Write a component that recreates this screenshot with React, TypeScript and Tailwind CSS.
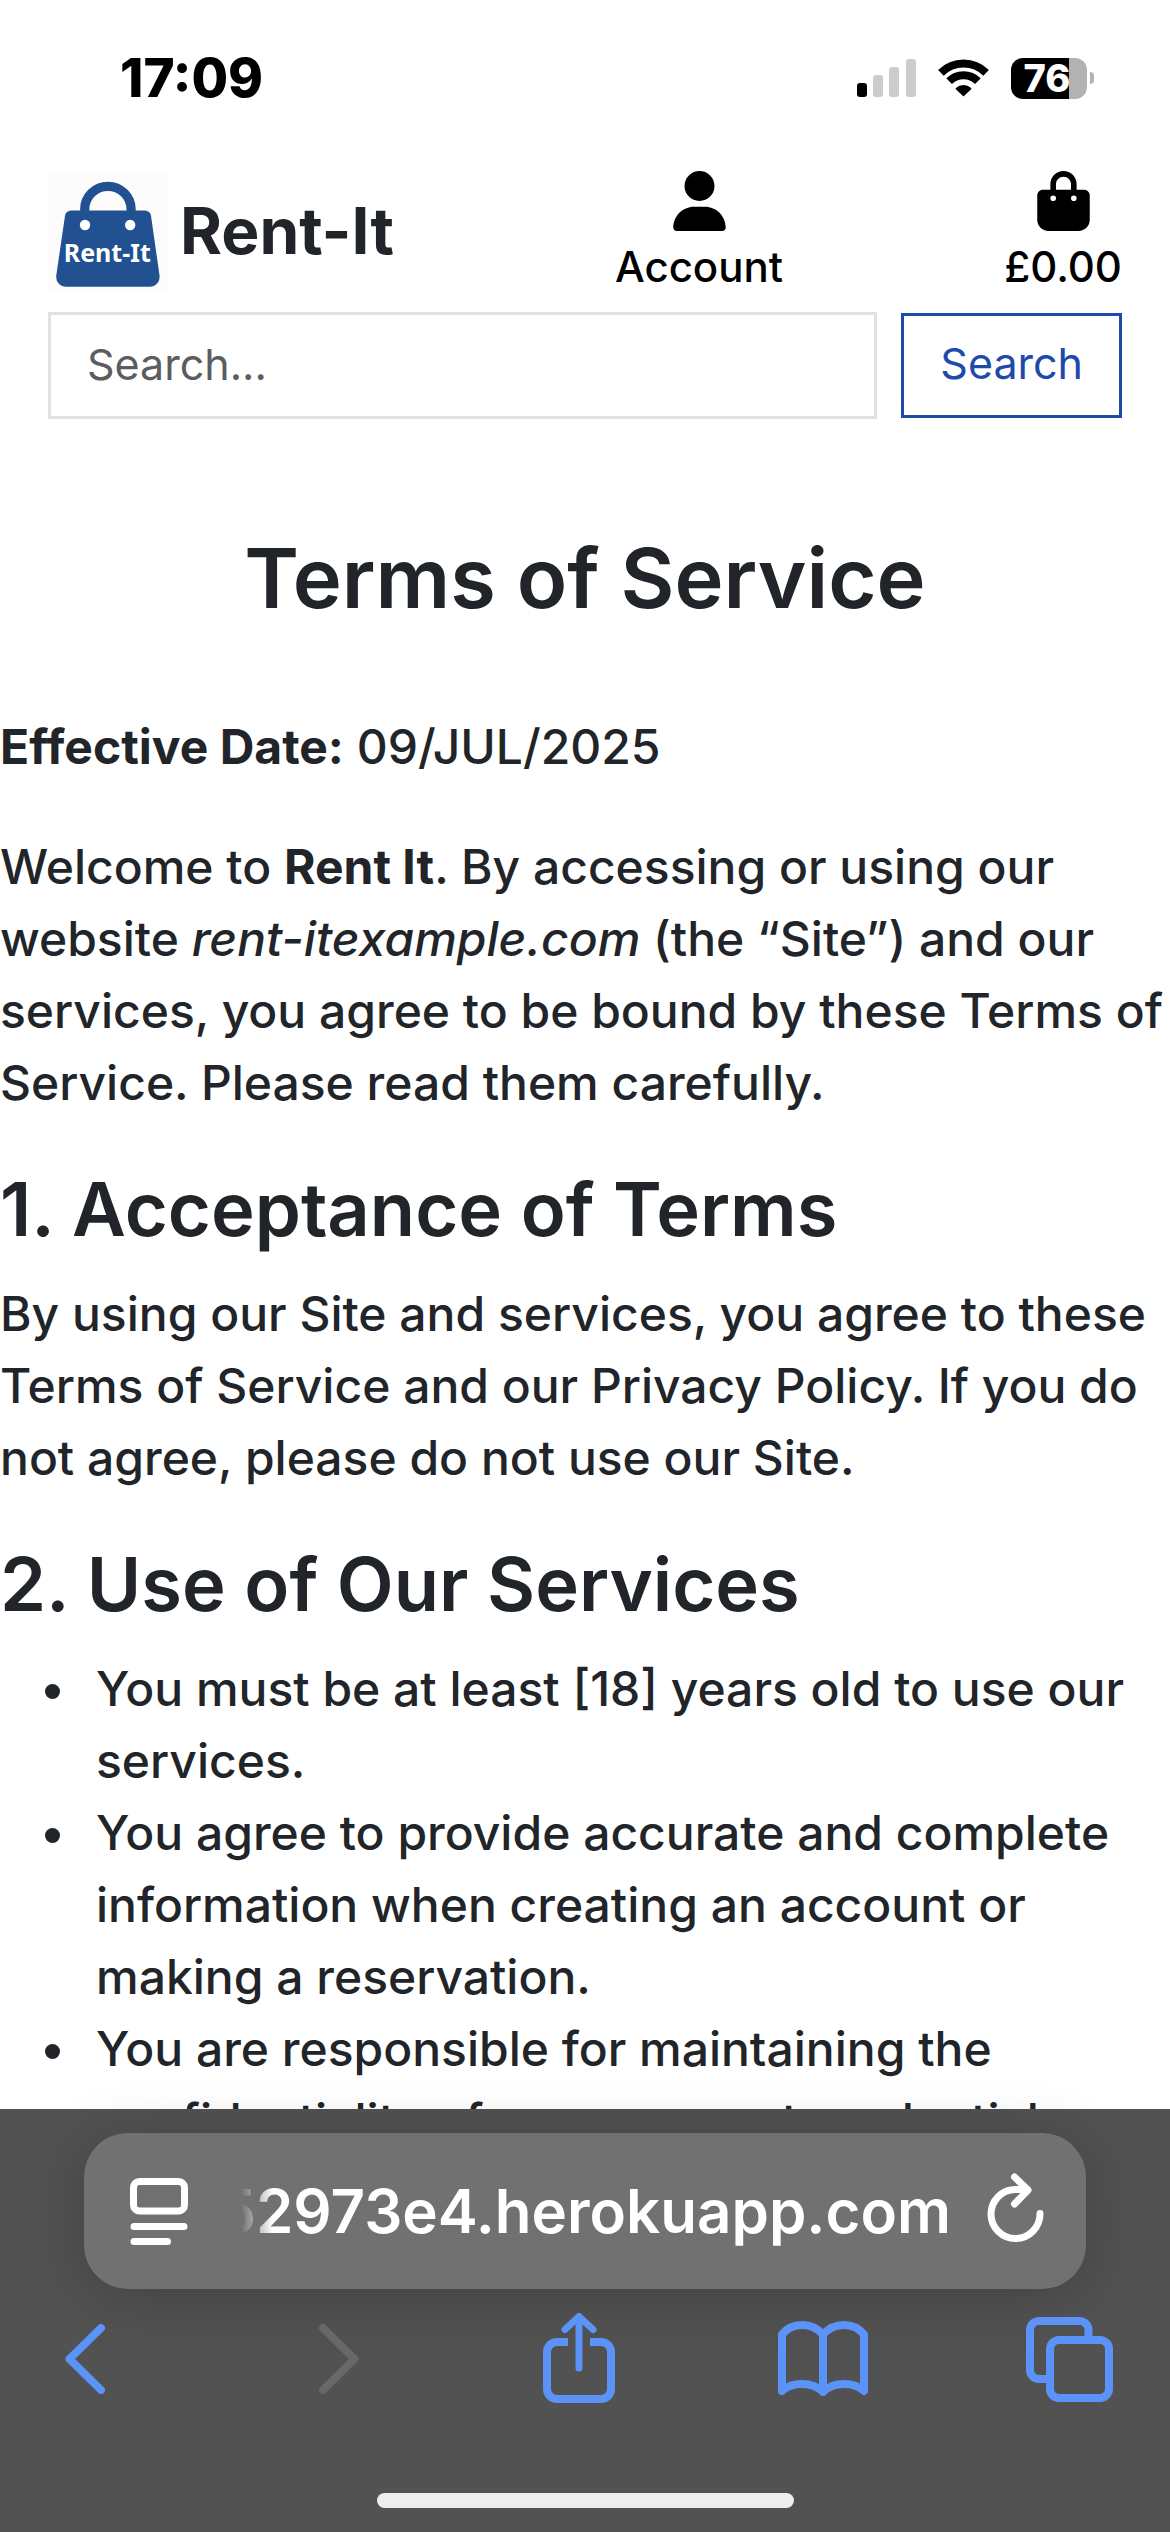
import type { ReactNode } from "react";
import { FaBagShopping, FaUser } from "react-icons/fa6";

function StatusBar() {
  return (
    <div className="flex h-[156px] shrink-0 items-center justify-between pr-[76px] pl-[120px] text-black">
      <time className="text-[53px] leading-none font-extrabold">17:09</time>
      <div className="flex items-center gap-[22px]">
        <svg className="h-[38px] w-[59px]" viewBox="0 0 59 38" aria-label="Signal strength" role="img">
          <rect x="0" y="24" width="10" height="14" rx="3" fill="#000" />
          <rect x="16" y="16" width="10" height="22" rx="3" fill="#ccc" />
          <rect x="32" y="8" width="10" height="30" rx="3" fill="#ccc" />
          <rect x="49" y="0" width="10" height="38" rx="3" fill="#ccc" />
        </svg>
        <svg className="h-[38px] w-[51px]" viewBox="0 0 51 38" aria-label="Wi-Fi" role="img">
          <g fill="none" stroke="#000" strokeWidth="8">
            <path d="M2.9 13.9A32 32 0 0 1 48.1 13.9" />
            <path d="M11.1 22.1A20.4 20.4 0 0 1 39.9 22.1" />
          </g>
          <path
            d="M25.5 36.5 18.4 29.6A10.5 10.5 0 0 1 32.6 29.6Z"
            fill="#000"
            stroke="#000"
            strokeWidth="1.5"
            strokeLinejoin="round"
          />
        </svg>
        <div className="flex items-center gap-[3px]">
          <div className="flex h-[41px] w-[76px] items-center justify-center rounded-[12px] bg-[linear-gradient(90deg,#000_76%,#b2b2b2_76%)] pr-[4px] text-[38px] leading-none font-extrabold text-white">
            76
          </div>
          <div className="h-[12px] w-[4px] rounded-r-full bg-[#b2b2b2]" />
        </div>
      </div>
    </div>
  );
}

function Logo() {
  return (
    <svg className="size-[120px] bg-[#fcfcfd]" viewBox="0 0 120 120" aria-hidden="true">
      <path d="M36.7 42V36.5a23.2 23.2 0 0 1 46.4 0V42" fill="none" stroke="#215190" strokeWidth="9.2" />
      <path
        d="M23 37.4H97a6 6 0 0 1 6 5.4L111.6 103a10 10 0 0 1-9.8 10.8H18A10 10 0 0 1 8.2 103L17 42.8a6 6 0 0 1 6-5.4Z"
        fill="#215190"
      />
      <circle cx="37" cy="52" r="5.2" fill="#fff" />
      <circle cx="82.2" cy="52" r="5.2" fill="#fff" />
      <text x="59.3" y="88.5" textAnchor="middle" fill="#fff" className="font-['Noto_Sans',sans-serif] text-[25px] font-bold">
        Rent-It
      </text>
    </svg>
  );
}

function Header() {
  return (
    <header className="px-12 pt-[15px]">
      <div className="flex items-start justify-between">
        <a href="#home" className="flex items-center gap-[12px] pt-0.5 text-[64px] leading-none font-bold">
          <Logo />
          <span className="pb-1">Rent-It</span>
        </a>
        <a href="#account" className="flex flex-col items-center gap-1 text-[42px] leading-[63px] font-medium text-black">
          <FaUser className="h-[60px] w-[53px]" />
          Account
        </a>
        <a href="#basket" className="flex flex-col items-center gap-1 text-[42px] leading-[63px] font-medium text-black">
          <FaBagShopping className="h-[60px] w-[53px]" />
          £0.00
        </a>
      </div>
      <form className="mt-[14px] flex items-center gap-6" onSubmit={(e) => e.preventDefault()}>
        <input
          type="search"
          aria-label="Search"
          placeholder="Search..."
          className="h-[107px] min-w-0 flex-1 border-3 border-[#dee2e6] bg-white px-9 pb-1 text-[43px] text-[#212529] outline-none placeholder:text-[#5c5d60]"
        />
        <button type="submit" className="h-[105px] border-3 border-[#1e4aaa] px-9 pb-1 text-[43px] text-[#1e4aaa]">
          Search
        </button>
      </form>
    </header>
  );
}

function Section({ title, children }: { title: string; children: ReactNode }) {
  return (
    <section className="mb-12">
      <h2 className="mb-[26px] text-[74px] leading-[85px] font-semibold">{title}</h2>
      {children}
    </section>
  );
}

function Item({ children }: { children: ReactNode }) {
  return (
    <li className="relative before:absolute before:top-[31px] before:-left-[51px] before:size-[15px] before:rounded-full before:bg-current">
      {children}
    </li>
  );
}

function Terms() {
  return (
    <main className="pt-[110px] text-[48px] leading-[72px] font-medium">
      <h1 className="mb-[84px] text-center text-[83px] leading-[98px] font-semibold">Terms of Service</h1>
      <p className="mb-12">
        <strong className="font-bold">Effective Date:</strong> 09/JUL/2025
      </p>
      <p className="mb-12">
        Welcome to <strong className="font-bold">Rent It</strong>. By accessing or using our website{" "}
        <em>rent-itexample.com</em> (the “Site”) and our services, you agree to be bound by these Terms of
        Service. Please read them carefully.
      </p>
      <Section title="1. Acceptance of Terms">
        <p>
          By using our Site and services, you agree to these Terms of Service and our Privacy Policy. If you do
          not agree, please do not use our Site.
        </p>
      </Section>
      <Section title="2. Use of Our Services">
        <ul className="pl-24">
          <Item>You must be at least [18] years old to use our services.</Item>
          <Item>You agree to provide accurate and complete information when creating an account or making a reservation.</Item>
          <Item>You are responsible for maintaining the confidentiality of your account credentials.</Item>
        </ul>
      </Section>
    </main>
  );
}

function BrowserBar() {
  return (
    <footer className="relative flex shrink-0 flex-col bg-[#525252] pt-6 pb-6">
      <div className="mx-[84px] flex h-[156px] items-center rounded-[44px] bg-[#717171] pr-[41px] pl-[46px] text-white shadow-[0_6px_60px_rgba(0,0,0,0.2)]">
        <button type="button" aria-label="Page settings">
          <svg className="h-[67px] w-[58px]" viewBox="0 0 58 67" fill="none" stroke="currentColor" strokeWidth="7" strokeLinecap="round">
            <rect x="3.5" y="3.5" width="51" height="29.5" rx="6" />
            <path d="M4 48.5H54M4 63.5H37.5" />
          </svg>
        </button>
        <button
          type="button"
          aria-label="Address"
          className="ml-[53px] flex min-w-0 flex-1 justify-end overflow-hidden text-[60px] leading-[76px] font-semibold whitespace-nowrap [mask-image:linear-gradient(90deg,transparent,#000_32px)]"
        >
          52973e4.herokuapp.com
        </button>
        <button type="button" aria-label="Reload" className="ml-[36px]">
          <svg className="h-[76px] w-[58px]" viewBox="0 0 58 76" fill="none" stroke="currentColor" strokeWidth="7" strokeLinecap="round" strokeLinejoin="round">
            <path d="M53 40.5A24.5 24.5 0 1 1 28.5 16.5H40" />
            <path d="M27.5 4 41 17 27.5 31" />
          </svg>
        </button>
      </div>
      <nav aria-label="Browser" className="mt-6 mr-[46px] ml-[30px] flex h-[92px] items-center justify-between text-[#5b93f8]">
        <button type="button" aria-label="Back" className="flex w-[110px] justify-center">
          <svg className="h-[70px] w-[40px]" viewBox="0 0 40 70" fill="none" stroke="currentColor" strokeWidth="8" strokeLinecap="round" strokeLinejoin="round">
            <path d="M36 4 4.5 35 36 66" />
          </svg>
        </button>
        <button type="button" aria-label="Forward" className="flex w-[110px] justify-center pl-4 text-[#686868]">
          <svg className="h-[70px] w-[40px]" viewBox="0 0 40 70" fill="none" stroke="currentColor" strokeWidth="8" strokeLinecap="round" strokeLinejoin="round">
            <path d="M4 4 35.5 35 4 66" />
          </svg>
        </button>
        <button type="button" aria-label="Share" className="flex w-[110px] justify-center pl-1">
          <svg className="h-[92px] w-[72px]" viewBox="0 0 72 92" fill="none" stroke="currentColor" strokeWidth="8">
            <path d="M25 29H14A10 10 0 0 0 4 39V76A10 10 0 0 0 14 86H58A10 10 0 0 0 68 76V39A10 10 0 0 0 58 29H47" />
            <path d="M36 4V55M22 16.5 36 3.5 50 16.5" strokeWidth="7" strokeLinecap="round" strokeLinejoin="round" />
          </svg>
        </button>
        <button type="button" aria-label="Bookmarks" className="flex w-[110px] justify-center">
          <svg className="h-[76px] w-[90px]" viewBox="0 0 90 76" fill="none" stroke="currentColor" strokeWidth="8" strokeLinecap="round" strokeLinejoin="round">
            <path d="M45 13.5C39 7 32 4 24.5 4S9 7 4 13.5V70C9 65 17 63 24.5 63S39 65 45 71C51 65 58 63 65.5 63S81 65 86 70V13.5C81 7 73 4 65.5 4S51 7 45 13.5V71" />
          </svg>
        </button>
        <button type="button" aria-label="Tabs" className="flex w-[110px] justify-center">
          <svg className="h-[85px] w-[87px]" viewBox="0 0 87 85" fill="none" stroke="currentColor" strokeWidth="8">
            <rect x="24" y="23" width="59" height="58" rx="9" />
            <path d="M62.5 20V13A9 9 0 0 0 53.5 4H13A9 9 0 0 0 4 13V53A9 9 0 0 0 13 62H21" />
          </svg>
        </button>
      </nav>
      <div className="mx-auto mt-[88px] h-[15px] w-[417px] rounded-full bg-[#eee]" />
    </footer>
  );
}

export default function App() {
  return (
    <div className="flex h-screen flex-col overflow-hidden bg-white font-['Inter',sans-serif] text-[#212529]">
      <StatusBar />
      <div className="min-h-0 flex-1 overflow-hidden">
        <Header />
        <Terms />
      </div>
      <BrowserBar />
    </div>
  );
}
